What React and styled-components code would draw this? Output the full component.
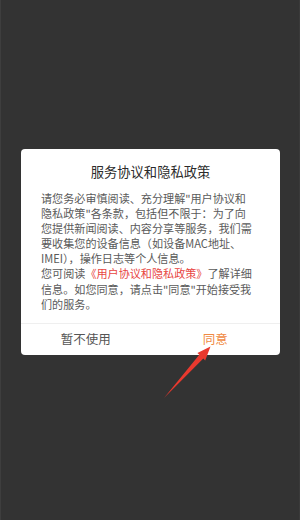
import React from "react"
import styled, { createGlobalStyle } from "styled-components"

const GlobalStyle = createGlobalStyle`
    html, body {
        margin: 0;
        padding: 0;
        background: #333333;
    }
    * {
        box-sizing: border-box;
    }
`

export default function App() {
    return (
        <Screen>
            <GlobalStyle />
            <Dialog>
                <Title>服务协议和隐私政策</Title>
                <Body>
                    请您务必审慎阅读、充分理解"用户协议和<br />
                    隐私政策"各条款，包括但不限于：为了向<br />
                    您提供新闻阅读、内容分享等服务，我们需<br />
                    要收集您的设备信息（如设备MAC地址、<br />
                    IMEI），操作日志等个人信息。<br />
                    您可阅读<PolicyLink>《用户协议和隐私政策》</PolicyLink>了解详细<br />
                    信息。如您同意，请点击"同意"开始接受我<br />
                    们的服务。
                </Body>
                <Actions>
                    <ActionButton>暂不使用</ActionButton>
                    <ActionButton primary>同意</ActionButton>
                </Actions>
            </Dialog>
            <Arrow viewBox="160 344 52 58" width="52" height="58">
                <polygon
                    points="163,398 202.3,358.6 204.2,360.4 209.5,346.5 196.4,353 198.3,354.8"
                    fill="#e8392e"
                />
            </Arrow>
        </Screen>
    )
}

const Screen = styled.div`
    position: relative;
    height: 520px;
    width: 300px;
    padding: 149px 21px 0 20px;
    background: #333333;
    border-left: 1px solid #3e3e3e;
    border-right: 1px solid #3a3a3a;
    font-family: "Noto Sans CJK SC", "Noto Sans", sans-serif;
`

const Dialog = styled.div`
    display: flex;
    flex-direction: column;
    width: 259px;
    height: 206px;
    border-radius: 4px;
    background: #ffffff;
    overflow: hidden;
`

const Title = styled.h1`
    margin: 0;
    padding-top: 14px;
    font-size: 13.3px;
    line-height: 18px;
    font-weight: 400;
    text-align: center;
    color: #2b2b2b;
`

const Body = styled.p`
    margin: 10px 0 0 0;
    padding: 0 10px 0 20px;
    font-size: 11.1px;
    line-height: 15.1px;
    white-space: nowrap;
    color: #5a5a5a;
`

const PolicyLink = styled.span`
    color: #e8453f;
`

const Actions = styled.div`
    display: flex;
    margin-top: auto;
    height: 32px;
    border-top: 1px solid #efefef;
`

const ActionButton = styled.div`
    flex: 1;
    display: flex;
    align-items: center;
    justify-content: center;
    font-size: 12.5px;
    padding-bottom: 2px;
    color: ${(props) => (props.primary ? "#f08a42" : "#555555")};
`

const Arrow = styled.svg`
    position: absolute;
    left: 160px;
    top: 344px;
`
